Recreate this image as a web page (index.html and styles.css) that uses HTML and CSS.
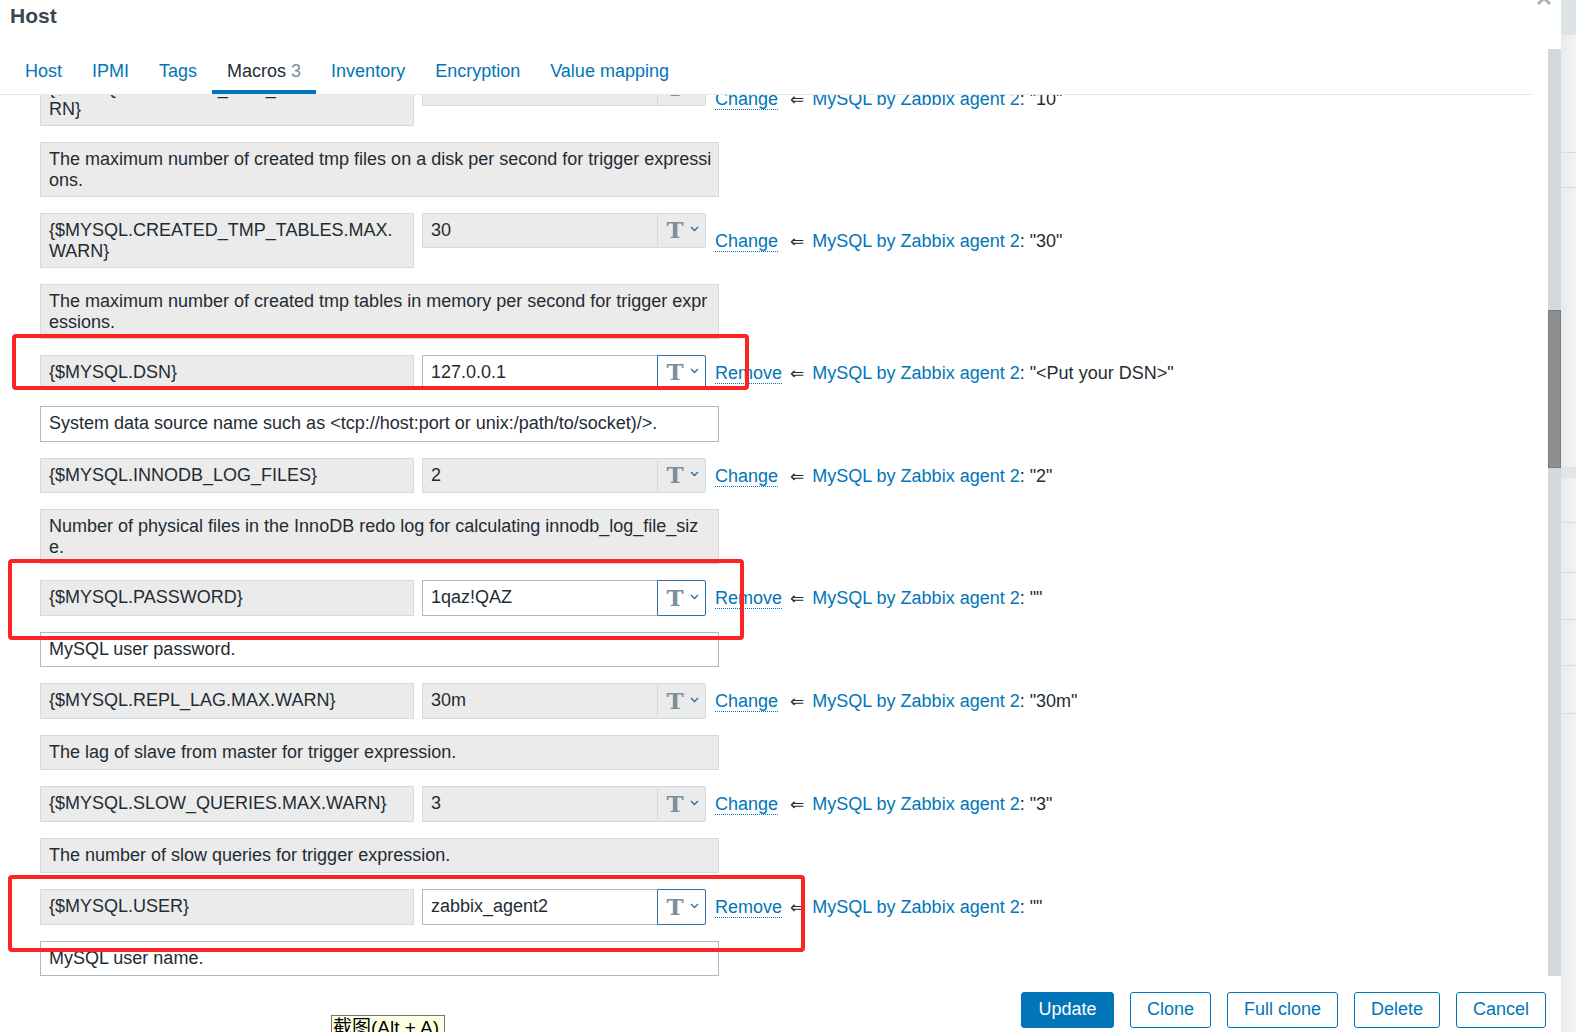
FILE: index.html
```html
<!DOCTYPE html>
<html>
<head>
<meta charset="utf-8">
<link rel="stylesheet" href="styles.css">
</head>
<body>
<div class="page">
  <div class="modal">
    <div class="modal-head">
      <h2 class="title">Host</h2>
      <svg class="close" width="16" height="16" viewBox="0 0 16 16"><path d="M2 2 L14 14 M14 2 L2 14" stroke="#a7b4bc" stroke-width="3" fill="none"/></svg>
    </div>
    <div class="modal-body">
      <div class="body-main">
        <div class="tabs">
          <span class="tab">Host</span>
          <span class="tab">IPMI</span>
          <span class="tab">Tags</span>
          <span class="tab active">Macros <span class="cnt">3</span></span>
          <span class="tab">Inventory</span>
          <span class="tab">Encryption</span>
          <span class="tab">Value mapping</span>
        </div>
        <div class="viewport">
          <div class="content">

            <div class="mrow">
              <div class="mname tall">{$MYSQL.CREATED_TMP_FILES.MAX.WA<br>RN}</div>
              <div class="mval"><div class="vin">10</div><div class="tbtn"><span class="tglyph">T</span><svg class="chev" width="9" height="6" viewBox="0 0 9 6"><path d="M1 1 L4.5 4.5 L8 1" stroke="#2f6ea5" stroke-width="1.4" fill="none"/></svg></div></div>
              <div class="mlink"><span class="actcell"><span class="act">Change</span></span><span class="arrow">⇐</span><span class="tpl">MySQL by Zabbix agent 2</span><span class="dv">: "10"</span></div>
            </div>
            <div class="desc tall">The maximum number of created tmp files on a disk per second for trigger expressi<br>ons.</div>

            <div class="mrow">
              <div class="mname tall">{$MYSQL.CREATED_TMP_TABLES.MAX.<br>WARN}</div>
              <div class="mval"><div class="vin">30</div><div class="tbtn"><span class="tglyph">T</span><svg class="chev" width="9" height="6" viewBox="0 0 9 6"><path d="M1 1 L4.5 4.5 L8 1" stroke="#2f6ea5" stroke-width="1.4" fill="none"/></svg></div></div>
              <div class="mlink"><span class="actcell"><span class="act">Change</span></span><span class="arrow">⇐</span><span class="tpl">MySQL by Zabbix agent 2</span><span class="dv">: "30"</span></div>
            </div>
            <div class="desc tall">The maximum number of created tmp tables in memory per second for trigger expr<br>essions.</div>

            <div class="mrow">
              <div class="mname">{$MYSQL.DSN}</div>
              <div class="mval edit"><div class="vin">127.0.0.1</div><div class="tbtn"><span class="tglyph">T</span><svg class="chev" width="9" height="6" viewBox="0 0 9 6"><path d="M1 1 L4.5 4.5 L8 1" stroke="#2f6ea5" stroke-width="1.4" fill="none"/></svg></div></div>
              <div class="mlink"><span class="actcell"><span class="act">Remove</span></span><span class="arrow">⇐</span><span class="tpl">MySQL by Zabbix agent 2</span><span class="dv">: "&lt;Put your DSN&gt;"</span></div>
            </div>
            <div class="desc edit">System data source name such as &lt;tcp://host:port or unix:/path/to/socket)/&gt;.</div>

            <div class="mrow">
              <div class="mname">{$MYSQL.INNODB_LOG_FILES}</div>
              <div class="mval"><div class="vin">2</div><div class="tbtn"><span class="tglyph">T</span><svg class="chev" width="9" height="6" viewBox="0 0 9 6"><path d="M1 1 L4.5 4.5 L8 1" stroke="#2f6ea5" stroke-width="1.4" fill="none"/></svg></div></div>
              <div class="mlink"><span class="actcell"><span class="act">Change</span></span><span class="arrow">⇐</span><span class="tpl">MySQL by Zabbix agent 2</span><span class="dv">: "2"</span></div>
            </div>
            <div class="desc tall">Number of physical files in the InnoDB redo log for calculating innodb_log_file_siz<br>e.</div>

            <div class="mrow">
              <div class="mname">{$MYSQL.PASSWORD}</div>
              <div class="mval edit"><div class="vin">1qaz!QAZ</div><div class="tbtn"><span class="tglyph">T</span><svg class="chev" width="9" height="6" viewBox="0 0 9 6"><path d="M1 1 L4.5 4.5 L8 1" stroke="#2f6ea5" stroke-width="1.4" fill="none"/></svg></div></div>
              <div class="mlink"><span class="actcell"><span class="act">Remove</span></span><span class="arrow">⇐</span><span class="tpl">MySQL by Zabbix agent 2</span><span class="dv">: ""</span></div>
            </div>
            <div class="desc edit">MySQL user password.</div>

            <div class="mrow">
              <div class="mname">{$MYSQL.REPL_LAG.MAX.WARN}</div>
              <div class="mval"><div class="vin">30m</div><div class="tbtn"><span class="tglyph">T</span><svg class="chev" width="9" height="6" viewBox="0 0 9 6"><path d="M1 1 L4.5 4.5 L8 1" stroke="#2f6ea5" stroke-width="1.4" fill="none"/></svg></div></div>
              <div class="mlink"><span class="actcell"><span class="act">Change</span></span><span class="arrow">⇐</span><span class="tpl">MySQL by Zabbix agent 2</span><span class="dv">: "30m"</span></div>
            </div>
            <div class="desc">The lag of slave from master for trigger expression.</div>

            <div class="mrow">
              <div class="mname">{$MYSQL.SLOW_QUERIES.MAX.WARN}</div>
              <div class="mval"><div class="vin">3</div><div class="tbtn"><span class="tglyph">T</span><svg class="chev" width="9" height="6" viewBox="0 0 9 6"><path d="M1 1 L4.5 4.5 L8 1" stroke="#2f6ea5" stroke-width="1.4" fill="none"/></svg></div></div>
              <div class="mlink"><span class="actcell"><span class="act">Change</span></span><span class="arrow">⇐</span><span class="tpl">MySQL by Zabbix agent 2</span><span class="dv">: "3"</span></div>
            </div>
            <div class="desc">The number of slow queries for trigger expression.</div>

            <div class="mrow">
              <div class="mname">{$MYSQL.USER}</div>
              <div class="mval edit"><div class="vin">zabbix_agent2</div><div class="tbtn"><span class="tglyph">T</span><svg class="chev" width="9" height="6" viewBox="0 0 9 6"><path d="M1 1 L4.5 4.5 L8 1" stroke="#2f6ea5" stroke-width="1.4" fill="none"/></svg></div></div>
              <div class="mlink"><span class="actcell"><span class="act">Remove</span></span><span class="arrow">⇐</span><span class="tpl">MySQL by Zabbix agent 2</span><span class="dv">: ""</span></div>
            </div>
            <div class="desc edit">MySQL user name.</div>

          </div>
        </div>
      </div>
      <div class="scrollbar"><div class="thumb"></div></div>
    </div>
    <div class="modal-foot">
      <button class="btn primary w-update">Update</button>
      <button class="btn w-clone">Clone</button>
      <button class="btn w-full">Full clone</button>
      <button class="btn w-delete">Delete</button>
      <button class="btn w-cancel">Cancel</button>
    </div>
  </div>
  <div class="bgpage">
    <div class="bg b1"></div>
    <div class="bg b2"></div>
    <div class="bg b3"></div>
    <div class="bg b4"></div>
    <div class="bg b5"></div>
    <div class="bg band"></div>
    <div class="bg b6"></div>
    <div class="bg b7"></div>
    <div class="bg b8"></div>
    <div class="bg b9"></div>
    <div class="bg b10"></div>
    <div class="bg b11"></div>
  </div>
</div>

<div class="mark mark1"></div>
<div class="mark mark2"></div>
<div class="mark mark3"></div>
<div class="tooltip">截图(Alt + A)</div>
</body>
</html>
```

FILE: styles.css
```css
* { box-sizing: border-box; }
html, body { margin: 0; padding: 0; }
html { overflow: hidden; }
body {
  width: 1576px;
  height: 1032px;
  overflow: hidden;
  font-family: "Liberation Sans", Arial, "Noto Sans CJK SC", sans-serif;
  font-size: 18px;
  color: #1f2c33;
  background: #eef1f3;
  position: relative;
}
.page {
  display: flex;
  height: 1032px;
}
.modal {
  width: 1561px;
  flex-shrink: 0;
  background: #ffffff;
  display: flex;
  flex-direction: column;
  height: 1032px;
}
.modal-head {
  height: 49px;
  position: relative;
  padding: 4px 0 0 10px;
}
.title {
  margin: 0;
  font-size: 21px;
  font-weight: bold;
  color: #3a4751;
  line-height: 24px;
}
.close {
  position: absolute;
  left: 1536px;
  top: -10px;
}
.modal-body {
  height: 927px;
  display: flex;
}
.body-main {
  flex: 1;
  display: flex;
  flex-direction: column;
  min-width: 0;
}
.tabs {
  height: 46px;
  flex-shrink: 0;
  margin-right: 15px;
  border-bottom: 1px solid #e6e9eb;
  display: flex;
  padding-left: 10px;
}
.tab {
  padding: 11px 15px 0;
  color: #0275b8;
  line-height: 22px;
  height: 45px;
}
.tab.active {
  color: #1f2c33;
  border-bottom: 4px solid #0275b8;
}
.tab .cnt { color: #768d99; }
.viewport {
  flex: 1;
  overflow: hidden;
}
.content {
  margin-top: -24.5px;
  padding-left: 40px;
}
.mrow {
  display: flex;
  align-items: flex-start;
  margin-bottom: 16px;
}
.mname, .desc, .vin {
  line-height: 21px;
  padding: 6px 8px 0;
  white-space: nowrap;
  overflow: hidden;
}
.mname {
  width: 374px;
  height: 35.5px;
  background: #ebebeb;
  border: 1px solid #d4dbdf;
}
.mname.tall, .desc.tall { height: 55px; }
.mval {
  margin-left: 8px;
  width: 284px;
  height: 35.5px;
  display: flex;
}
.vin {
  flex: 1;
  height: 35.5px;
  background: #ebebeb;
  border: 1px solid #d4dbdf;
  border-right: none;
}
.tbtn {
  width: 49px;
  height: 35.5px;
  background: #ebebeb;
  border: 1px solid #d4dbdf;
  border-radius: 0 2px 2px 0;
  display: flex;
  align-items: center;
  justify-content: center;
  gap: 6px;
  padding-left: 2px;
}
.tglyph {
  font-family: "DejaVu Serif", "Liberation Serif", serif;
  font-weight: bold;
  font-size: 23px;
  color: #7c909b;
  line-height: 22px;
}
.chev { margin-top: -2px; }
.mval.edit .vin {
  background: #ffffff;
  border-color: #acbbc2;
}
.mval.edit .tbtn {
  background: #ffffff;
  border-color: #2f6ea5;
}
.mlink {
  align-self: center;
  margin-left: 9px;
  white-space: nowrap;
  line-height: 22px;
  padding-top: 1px;
}
.actcell {
  display: inline-block;
  width: 75px;
}
.act {
  color: #0275b8;
  border-bottom: 1px dotted #0275b8;
}
.arrow {
  font-family: "DejaVu Sans", sans-serif;
  font-size: 17px;
  margin: 0 8px 0 0;
  color: #1f2c33;
}
.tpl { color: #0275b8; }
.dv { color: #1f2c33; }
.desc {
  width: 679px;
  height: 35.5px;
  background: #ebebeb;
  border: 1px solid #d4dbdf;
  margin-bottom: 16px;
}
.desc.edit {
  background: #ffffff;
  border-color: #acbbc2;
}
.scrollbar {
  width: 13px;
  background: #d2dae0;
  padding-top: 261px;
}
.thumb {
  height: 158px;
  background: #8f8f8f;
  border: 1px solid #7a7a7a;
}
.modal-foot {
  flex: 1;
  display: flex;
  justify-content: flex-end;
  align-items: flex-start;
  gap: 16px;
  padding: 16px 15px 0 0;
}
.btn {
  height: 35.5px;
  font-family: "Liberation Sans", Arial, sans-serif;
  font-size: 18px;
  color: #0275b8;
  background: #ffffff;
  border: 1px solid #0275b8;
  border-radius: 3px;
  padding: 0;
}
.btn.primary {
  background: #0275b8;
  color: #ffffff;
}
.w-update { width: 93px; }
.w-clone { width: 81px; }
.w-full { width: 111px; }
.w-delete { width: 86px; }
.w-cancel { width: 90px; }
.bgpage {
  flex: 1;
  display: flex;
  flex-direction: column;
}
.bg {
  background: linear-gradient(to right, #e8ebee, #f1f3f5);
  border-bottom: 1px solid #d6dce0;
}
.b1 { height: 35px; background: #dde2e6; border-bottom: none; }
.b2 { height: 118px; }
.b3 { height: 35px; }
.b4 { height: 212px; border-bottom: none; }
.b5 { height: 67px; border-bottom: none; }
.band { height: 11px; background: #e1e5e8; border-bottom: none; }
.b6 { height: 45px; }
.b7 { height: 50px; }
.b8 { height: 47px; }
.b9 { height: 46px; }
.b10 { height: 48px; }
.b11 { flex: 1; border-bottom: none; }
.mark {
  position: absolute;
  border: 4px solid #ff2424;
  border-radius: 4px;
}
.mark1 { left: 12px; top: 334px; width: 737px; height: 56px; }
.mark2 { left: 8px; top: 559px; width: 736px; height: 81px; }
.mark3 { left: 8px; top: 875px; width: 797px; height: 77px; }
.tooltip {
  position: absolute;
  left: 331px;
  top: 1015px;
  width: 114px;
  height: 17px;
  overflow: hidden;
  background: #ffffe1;
  border: 1px solid #767676;
  border-bottom: none;
  color: #000000;
  font-size: 19px;
  line-height: 22px;
  padding: 1px 0 0 1px;
  white-space: nowrap;
}
```
